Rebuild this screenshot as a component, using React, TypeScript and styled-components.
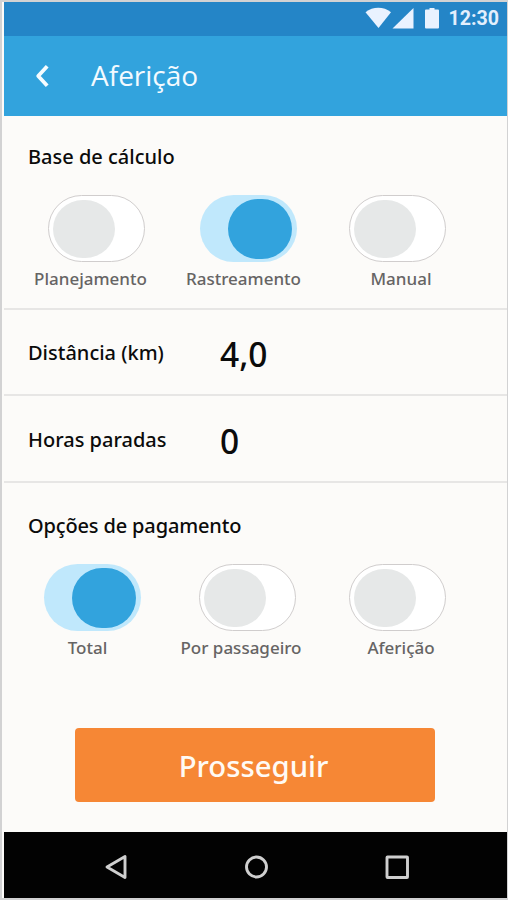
import React, { useState } from 'react';
import styled, { createGlobalStyle } from 'styled-components';

const GlobalStyle = createGlobalStyle`
  *, *::before, *::after { box-sizing: border-box; }
  body { margin: 0; background: #d2d2d2; }
`;

const Phone = styled.div`
  width: 508px;
  height: 900px;
  display: flex;
  flex-direction: column;
  border-style: solid;
  border-color: #d2d2d3;
  border-width: 2px 1px 2px 2px;
  padding-left: 2px;
  background: #fcfbf9;
  font-family: "Noto Sans", "Open Sans", sans-serif;
  color: #0b0b0b;
  overflow: hidden;
`;

const StatusBar = styled.div`
  height: 34px;
  flex: none;
  display: flex;
  align-items: center;
  justify-content: flex-end;
  padding: 0 8px 2px 0;
  background: #2485c7;
`;

const StatusIcons = styled.svg`
  display: block;
  margin-right: 9px;
`;

const Clock = styled.span`
  font: 700 19.6px/24px Roboto, sans-serif;
  color: #e3effd;
  padding-top: 1px;
`;

const AppBar = styled.header`
  height: 80px;
  flex: none;
  display: flex;
  align-items: center;
  padding-left: 29px;
  background: #32a3dd;
`;

const BackButton = styled.button`
  display: flex;
  width: 58px;
  padding: 0;
  border: 0;
  background: none;
`;

const Title = styled.h1`
  margin: 0 0 2px;
  font-size: 28px;
  font-weight: 400;
  line-height: 38px;
  color: #f3faff;
  font-family: "Open Sans", "Noto Sans", sans-serif;
`;

const Section = styled.section<{ $height: number; $top: number }>`
  height: ${(p) => p.$height}px;
  flex: none;
  padding-top: ${(p) => p.$top}px;
`;

const Heading = styled.h2<{ $tight?: boolean }>`
  margin: 0 0 0 24px;
  font-size: 20px;
  font-weight: 500;
  line-height: 28px;
  letter-spacing: ${(p) => (p.$tight ? '-0.15px' : '0')};
`;

const Options = styled.div<{ $columns: string }>`
  display: grid;
  grid-template-columns: ${(p) => p.$columns};
  margin: 24px 0 0 9px;
`;

const Option = styled.div`
  display: flex;
  flex-direction: column;
  align-items: center;
`;

const Track = styled.button<{ $on: boolean; $shift: number }>`
  width: 97px;
  height: 67px;
  flex: none;
  display: flex;
  align-items: center;
  justify-content: ${(p) => (p.$on ? 'flex-end' : 'flex-start')};
  margin-left: ${(p) => Math.max(p.$shift, 0)}px;
  margin-right: ${(p) => Math.max(-p.$shift, 0)}px;
  padding: ${(p) => (p.$on ? '0 5px 0 0' : '0 0 0 4px')};
  border: ${(p) => (p.$on ? '0' : '1.5px solid #d0cdcd')};
  border-radius: 34px;
  background: ${(p) => (p.$on ? '#c0e8fc' : '#ffffff')};
`;

const Knob = styled.span<{ $on: boolean }>`
  width: ${(p) => (p.$on ? 64 : 62)}px;
  height: ${(p) => (p.$on ? 60 : 58)}px;
  border-radius: ${(p) => (p.$on ? '30px' : '30px / 29px')};
  background: ${(p) => (p.$on ? '#32a3dd' : '#e6e8e8')};
`;

const Label = styled.span`
  margin-top: 5px;
  font-size: 17px;
  font-weight: 500;
  line-height: 24px;
  white-space: nowrap;
  color: #666464;
`;

const Field = styled.div<{ $height: number }>`
  height: ${(p) => p.$height}px;
  flex: none;
  display: grid;
  grid-template-columns: 191px 1fr;
  align-items: center;
  padding: 2px 0 0 24px;
  font-weight: 500;
`;

const FieldName = styled.span`
  font-size: 20px;
  line-height: 28px;
`;

const FieldValue = styled.span`
  font-size: 33.5px;
  line-height: 46px;
  padding: 2px 0 0 1px;
`;

const Divider = styled.hr`
  width: 100%;
  height: 2px;
  flex: none;
  margin: 0;
  border: 0;
  background: #e7e6e5;
`;

const Actions = styled.div`
  flex: 1;
  padding: 0 72px 0 71px;
`;

const Submit = styled.button`
  width: 360px;
  height: 74px;
  border: 0;
  border-radius: 4px;
  padding: 1px 3px 0 0;
  background: #f68735;
  color: #fffaf4;
  font: 500 29.3px/40px "Noto Sans", sans-serif;
`;

const NavBar = styled.nav`
  height: 66px;
  flex: none;
  display: flex;
  align-items: center;
  justify-content: space-between;
  padding: 3px 97px 0 99px;
  background: #020202;
`;

const NavIcon = styled.svg`
  display: block;
  fill: none;
  stroke: #cfcfcf;
  stroke-width: 2.9;
  stroke-linejoin: round;
`;

type Choice = { label: string; shift: number };

const bases: Choice[] = [
  { label: 'Planejamento', shift: 12 },
  { label: 'Rastreamento', shift: 10 },
  { label: 'Manual', shift: -7 },
];

const payments: Choice[] = [
  { label: 'Total', shift: 10 },
  { label: 'Por passageiro', shift: 13 },
  { label: 'Aferição', shift: -7 },
];

function ToggleGroup({ choices, initial, columns }: { choices: Choice[]; initial: string; columns: string }) {
  const [selected, setSelected] = useState(initial);
  return (
    <Options $columns={columns}>
      {choices.map(({ label, shift }) => {
        const on = label === selected;
        return (
          <Option key={label}>
            <Track $on={on} $shift={shift} role="switch" aria-checked={on} aria-label={label} onClick={() => setSelected(label)}>
              <Knob $on={on} />
            </Track>
            <Label>{label}</Label>
          </Option>
        );
      })}
    </Options>
  );
}

export default function App() {
  return (
    <>
      <GlobalStyle />
      <Phone>
        <StatusBar>
          <StatusIcons width="75" height="22" viewBox="0 0 75 22" fill="#e9f2ff">
            <path d="M0.5 5.2C8 -0.6 18.500 -0.600 26 5.200L13.500 21Z" />
            <path d="M48.500 1V21.500H27.500Z" />
            <path d="M64.500 1h5v1.500h3.500q1 0 1 1v17q0 1-1 1h-12q-1 0-1-1v-17q0-1 1-1h3.500z" />
          </StatusIcons>
          <Clock>12:30</Clock>
        </StatusBar>
        <AppBar>
          <BackButton aria-label="Voltar">
            <svg width="18" height="26" viewBox="0 0 18 26" fill="none" stroke="#f6fcff" strokeWidth="3.8">
              <path d="M14.200 3.200L5.200 13L14.200 22.800" strokeLinejoin="round" />
            </svg>
          </BackButton>
          <Title>Aferição</Title>
        </AppBar>

        <Section $height={192} $top={27}>
          <Heading>Base de cálculo</Heading>
          <ToggleGroup choices={bases} initial="Rastreamento" columns="155px 151px 164px" />
        </Section>
        <Divider />
        <Field $height={84}>
          <FieldName>Distância (km)</FieldName>
          <FieldValue>4,0</FieldValue>
        </Field>
        <Divider />
        <Field $height={85}>
          <FieldName>Horas paradas</FieldName>
          <FieldValue>0</FieldValue>
        </Field>
        <Divider />
        <Section $height={245} $top={29}>
          <Heading $tight>Opções de pagamento</Heading>
          <ToggleGroup choices={payments} initial="Total" columns="149px 158px 162px" />
        </Section>
        <Actions>
          <Submit>Prosseguir</Submit>
        </Actions>

        <NavBar>
          <NavIcon width="26" height="28" viewBox="0 0 26 28">
            <path d="M22 3.500V24.500L4 14Z" />
          </NavIcon>
          <NavIcon width="26" height="26" viewBox="0 0 26 26">
            <circle cx="12.500" cy="13" r="10" />
          </NavIcon>
          <NavIcon width="26" height="26" viewBox="0 0 26 26">
            <rect x="3" y="3" width="20.500" height="20.500" rx="0.500" />
          </NavIcon>
        </NavBar>
      </Phone>
    </>
  );
}
